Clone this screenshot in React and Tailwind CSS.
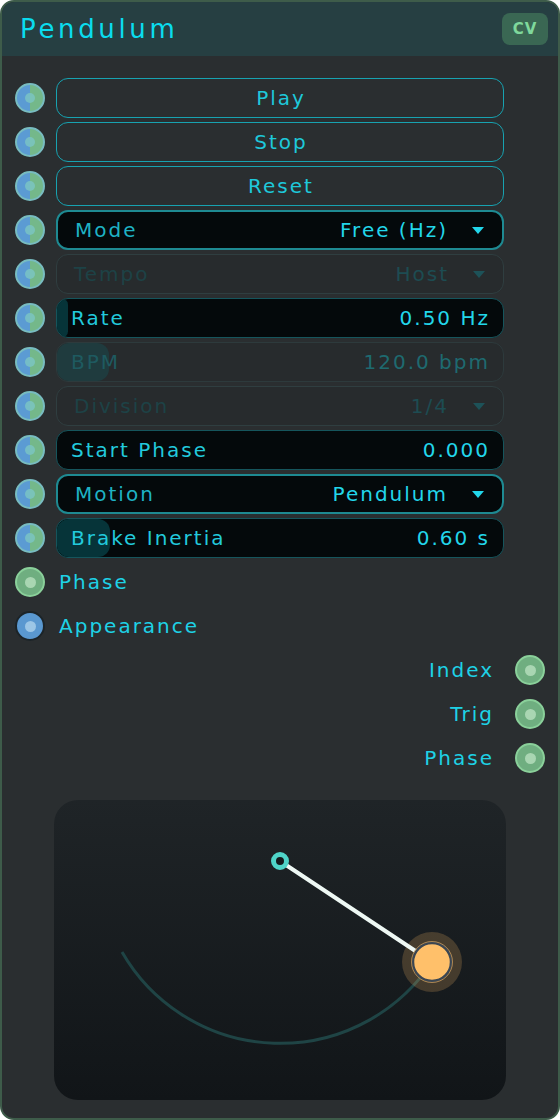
import React from 'react';

const rows = [
    { kind: 'button', label: 'Play' },
    { kind: 'button', label: 'Stop' },
    { kind: 'button', label: 'Reset' },
    { kind: 'select', label: 'Mode', value: 'Free (Hz)' },
    { kind: 'select', label: 'Tempo', value: 'Host', disabled: true },
    { kind: 'slider', label: 'Rate', value: '0.50 Hz', fill: 11 },
    { kind: 'slider', label: 'BPM', value: '120.0 bpm', fill: 52, disabled: true },
    { kind: 'select', label: 'Division', value: '1/4', disabled: true },
    { kind: 'slider', label: 'Start Phase', value: '0.000', fill: 0 },
    { kind: 'select', label: 'Motion', value: 'Pendulum' },
    { kind: 'slider', label: 'Brake Inertia', value: '0.60 s', fill: 53 },
];

const outputs = ['Index', 'Trig', 'Phase'];

const CvPort = () => (
    <div className="w-[30px] h-[30px] shrink-0 rounded-full border-2 border-[#78bcc0] bg-[linear-gradient(90deg,#5b9bd3_50%,#74b88a_50%)] flex items-center justify-center">
        <div className="w-[10px] h-[10px] rounded-full bg-[#7cc6c4]/80" />
    </div>
);

const GreenPort = () => (
    <div className="w-[30px] h-[30px] shrink-0 rounded-full border-2 border-[#8ad09a] bg-[#6fae80] flex items-center justify-center">
        <div className="w-[11px] h-[11px] rounded-full bg-[#a9d6b2]" />
    </div>
);

const BluePort = () => (
    <div className="w-[30px] h-[30px] shrink-0 rounded-full border-2 border-[#1c2428] bg-[#5a98d0] flex items-center justify-center">
        <div className="w-[11px] h-[11px] rounded-full bg-[#9cc6e6]" />
    </div>
);

const Caret = ({ dim }) => (
    <svg width="12" height="7" viewBox="0 0 12 7" className="ml-[24px] shrink-0">
        <polygon points="0,0 12,0 6,7" fill={dim ? '#1d5258' : '#22d6ea'} />
    </svg>
);

const Control = ({ row }) => {
    if (row.kind === 'button') {
        return (
            <button className="w-[448px] h-10 rounded-xl border border-[#17a2b0] text-[#1ec8da] text-[20px] tracking-[0.1em] flex items-center justify-center pl-[2px]">
                {row.label}
            </button>
        );
    }
    if (row.kind === 'select') {
        return (
            <div className={`w-[448px] h-10 rounded-xl flex items-center pl-[17px] pr-[18px] text-[20px] tracking-[0.1em] ${
                row.disabled
                    ? 'border border-[#2f3e40] bg-[#272b2d] text-[#1d4246]'
                    : 'border-2 border-[#1e8a92] bg-[#04090b] text-[#1eb2c4]'
            }`}>
                <span>{row.label}</span>
                <span className={`ml-auto ${row.disabled ? 'text-[#1d4c52]' : 'text-[#22d6ea]'}`}>{row.value}</span>
                <Caret dim={row.disabled} />
            </div>
        );
    }
    return (
        <div className={`relative w-[448px] h-10 rounded-xl overflow-hidden flex items-center pl-[14px] pr-[13px] text-[20px] tracking-[0.1em] ${
            row.disabled
                ? 'border border-[#2d3a3c] bg-[#272b2d]'
                : 'border border-[#15555c] bg-[#04090b]'
        }`}>
            {row.fill > 0 && (
                <div
                    className={`absolute left-0 top-0 bottom-0 rounded-xl ${row.disabled ? 'bg-[#1f3b3e]' : 'bg-[#063439]'}`}
                    style={{ width: row.fill }}
                />
            )}
            <span className={`relative ${row.disabled ? 'text-[#1e5a60]' : 'text-[#22cadc]'}`}>{row.label}</span>
            <span className={`relative ml-auto ${row.disabled ? 'text-[#1e6a70]' : 'text-[#22d6ea]'}`}>{row.value}</span>
        </div>
    );
};

const PendulumView = () => (
    <div className="mx-auto mt-[22px] w-[452px] h-[300px] rounded-[24px] bg-[linear-gradient(180deg,#1f2427,#111518)] overflow-hidden">
        <svg width="452" height="300" viewBox="0 0 452 300">
            <path d="M 68 152 A 182.5 182.5 0 0 0 378 162" fill="none" stroke="#1f4445" strokeWidth="3" />
            <circle cx="378" cy="162" r="30" fill="#ffc06a" fillOpacity="0.2" />
            <line x1="226" y1="61" x2="378" y2="162" stroke="#eef8f4" strokeWidth="4" strokeLinecap="round" />
            <circle cx="378" cy="162" r="19" fill="#ffc06a" stroke="#3b4652" strokeWidth="2.5" />
            <circle cx="378" cy="162" r="20.5" fill="none" stroke="#c99a5c" strokeWidth="0.8" />
            <circle cx="226" cy="61" r="6.5" fill="#151a1d" stroke="#4fd4c8" strokeWidth="5" />
        </svg>
    </div>
);

const App = () => {
    return (
        <div className="w-[560px] h-[1120px] bg-white font-['DejaVu_Sans',sans-serif]">
            <div className="w-full h-full rounded-[14px] border-2 border-[#3e5c4a] bg-[#2a2e30] overflow-hidden">
                {/* Header */}
                <div className="h-[54px] bg-[#263f42] flex items-center justify-between pl-[18px] pr-[10px]">
                    <h1 className="text-[26px] tracking-[0.14em] text-[#0adcee]">Pendulum</h1>
                    <div className="w-[46px] h-8 rounded-lg bg-[#3a6753] flex items-center justify-center text-[#7fd89c] text-[15px] font-bold tracking-[0.06em]">
                        CV
                    </div>
                </div>

                <div className="pt-[22px] pl-[13px] flex flex-col gap-1">
                    {rows.map(row => (
                        <div key={row.label} className="h-10 flex items-center gap-[11px]">
                            <CvPort />
                            <Control row={row} />
                        </div>
                    ))}
                    <div className="h-10 flex items-center gap-[14px]">
                        <GreenPort />
                        <span className="text-[20px] tracking-[0.1em] text-[#1ed2e6]">Phase</span>
                    </div>
                    <div className="h-10 flex items-center gap-[14px]">
                        <BluePort />
                        <span className="text-[20px] tracking-[0.1em] text-[#1ed2e6]">Appearance</span>
                    </div>
                    {outputs.map(name => (
                        <div key={name} className="h-10 flex items-center justify-end gap-[21px] pr-[13px]">
                            <span className="text-[20px] tracking-[0.1em] text-[#1ed2e6]">{name}</span>
                            <GreenPort />
                        </div>
                    ))}
                </div>

                <PendulumView />
            </div>
        </div>
    );
};

export default App;
